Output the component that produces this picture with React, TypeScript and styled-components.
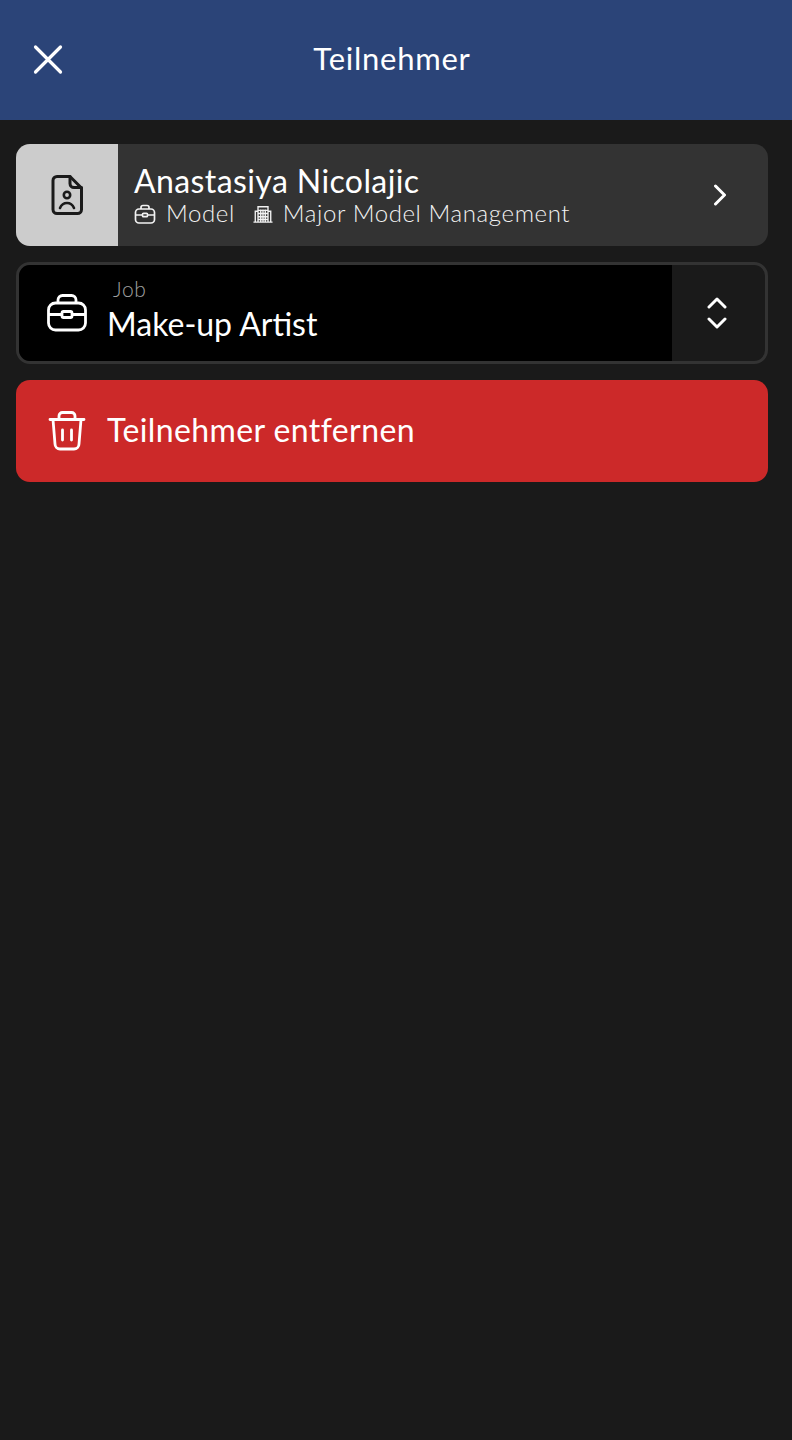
import styled, { createGlobalStyle } from 'styled-components';

const GlobalStyle = createGlobalStyle`
  html, body {
    margin: 0;
    padding: 0;
    background: #1a1a1a;
  }

  * {
    box-sizing: border-box;
  }
`;

const Page = styled.div`
  font-family: Lato, "Open Sans", sans-serif;
  width: 792px;
  min-height: 1440px;
  background: #1a1a1a;
  color: #fff;
`;

const Header = styled.header`
  display: flex;
  align-items: center;
  justify-content: center;
  position: relative;
  height: 120px;
  padding: 0 8px 4px 0;
  background: #2b4478;
`;

const CloseButton = styled.div`
  position: absolute;
  left: 30px;
  top: 42px;
  width: 36px;
  height: 36px;
`;

const Title = styled.h1`
  font-size: 31px;
  font-weight: 400;
  letter-spacing: 0.75px;
  margin: 0;
`;

const Content = styled.main`
  display: flex;
  flex-direction: column;
  gap: 16px;
  padding: 24px 24px 24px 16px;
`;

const ParticipantCard = styled.div`
  display: flex;
  align-items: center;
  height: 102px;
  border-radius: 14px;
  overflow: hidden;
  background: #333;
`;

const Thumb = styled.div`
  display: flex;
  align-items: center;
  justify-content: center;
  flex: none;
  width: 102px;
  height: 102px;
  background: #ccc;
`;

const ParticipantInfo = styled.div`
  display: flex;
  flex-direction: column;
  flex: 1;
  padding: 0 0 2px 16px;
`;

const ParticipantName = styled.div`
  font-size: 32px;
  line-height: 38px;
  letter-spacing: 0.4px;
`;

const MetaRow = styled.div`
  display: flex;
  align-items: center;
  height: 28px;
  margin-top: -2px;
  font-size: 24px;
  font-weight: 300;
  letter-spacing: 0.6px;
  color: #f2f2f2;

  svg {
    margin-top: 4px;
  }
`;

const MetaItem = styled.span`
  display: flex;
  align-items: center;
  gap: 10px;
  margin-right: 18px;
`;

const Chevron = styled.div`
  display: flex;
  justify-content: center;
  flex: none;
  width: 96px;
`;

const JobField = styled.div`
  display: flex;
  height: 102px;
  border: 3px solid #333;
  border-radius: 14px;
  overflow: hidden;
`;

const JobMain = styled.div`
  display: flex;
  align-items: center;
  flex: 1;
  gap: 20px;
  padding-left: 28px;
  background: #000;
`;

const JobText = styled.div`
  display: flex;
  flex-direction: column;
  gap: 4px;
  padding-bottom: 6px;
`;

const JobLabel = styled.div`
  font-size: 21px;
  font-weight: 300;
  line-height: 24px;
  letter-spacing: 0.6px;
  padding-left: 6px;
  color: #a0a0a0;
`;

const JobValue = styled.div`
  font-size: 32px;
  line-height: 38px;
`;

const JobToggle = styled.div`
  display: flex;
  align-items: center;
  justify-content: center;
  flex: none;
  width: 93px;
  padding-right: 3px;
`;

const RemoveButton = styled.button`
  font: inherit;
  font-size: 32px;
  letter-spacing: 0.4px;
  display: flex;
  align-items: center;
  gap: 21px;
  height: 102px;
  padding: 0 0 0 32px;
  border: 0;
  border-radius: 14px;
  color: #fff;
  background: #cc2929;
`;

const RemoveLabel = styled.span`
  padding-bottom: 4px;
`;

export default function App() {
  return (
    <Page>
      <GlobalStyle />
      <Header>
        <CloseButton>
          <svg width="36" height="36" viewBox="0 0 36 36" fill="none" stroke="#fff" strokeWidth="3.2" strokeLinecap="round">
            <path d="M5.500 5 30.500 30M30.500 5 5.500 30" />
          </svg>
        </CloseButton>
        <Title>Teilnehmer</Title>
      </Header>
      <Content>
        <ParticipantCard>
          <Thumb>
            <svg width="32" height="40" viewBox="0 0 32 40" fill="none" stroke="#1a1a1a" strokeWidth="3" strokeLinecap="round" strokeLinejoin="round">
              <path d="M6 1.500h13l11.500 11.500v21.500a4 4 0 0 1-4 4H6a4 4 0 0 1-4-4V5.500a4 4 0 0 1 4-4Z" />
              <path d="M19 1.500v7a4 4 0 0 0 4 4h7.500" />
              <circle cx="16" cy="20" r="3.200" strokeWidth="2.600" />
              <path d="M9 33c1.500-3.500 4-5 7-5s5.500 1.500 7 5" strokeWidth="2.600" />
            </svg>
          </Thumb>
          <ParticipantInfo>
            <ParticipantName>Anastasiya Nicolajic</ParticipantName>
            <MetaRow>
              <MetaItem>
                <svg width="22" height="20" viewBox="0 0 22 20" fill="none" stroke="#f2f2f2" strokeWidth="1.700" strokeLinejoin="round">
                  <rect x="1.500" y="5" width="19" height="14" rx="3.500" />
                  <path d="M7 5V3.500A2 2 0 0 1 9 1.500h4a2 2 0 0 1 2 2V5M1.500 11h6.500M14 11h6.500" />
                  <rect x="8.500" y="9.300" width="5" height="3.400" rx="1" />
                </svg>
                Model
              </MetaItem>
              <MetaItem>
                <svg width="20" height="20" viewBox="0 0 22 20" fill="none" stroke="#f2f2f2" strokeWidth="1.500">
                  <path d="M0.500 19h21M2.500 19V7h3M19.500 19V7h-3M5.500 19V2h11v17M8.500 5v14M11 5v14M13.500 5v14M5.500 6h11M5.500 9.500h11M5.500 13h11M5.500 16h11" />
                </svg>
                Major Model Management
              </MetaItem>
            </MetaRow>
          </ParticipantInfo>
          <Chevron>
            <svg width="14" height="22" viewBox="0 0 14 22" fill="none" stroke="#fff" strokeWidth="3" strokeLinecap="round" strokeLinejoin="round">
              <path d="M2.500 2 11.500 11 2.500 20" />
            </svg>
          </Chevron>
        </ParticipantCard>
        <JobField>
          <JobMain>
            <svg width="40" height="38" viewBox="0 0 40 38" fill="none" stroke="#fff" strokeWidth="2.800" strokeLinejoin="round">
              <rect x="1.500" y="9" width="37" height="27" rx="7" />
              <path d="M11 9V6a4.500 4.500 0 0 1 4.500-4.500h9A4.500 4.500 0 0 1 29 6v3M1.500 20.500H15M25 20.500h13.500" />
              <rect x="15" y="17.500" width="10" height="6" rx="1.500" />
            </svg>
            <JobText>
              <JobLabel>Job</JobLabel>
              <JobValue>Make-up Artist</JobValue>
            </JobText>
          </JobMain>
          <JobToggle>
            <svg width="20" height="32" viewBox="0 0 20 32" fill="none" stroke="#fff" strokeWidth="3" strokeLinecap="round" strokeLinejoin="round">
              <path d="M2 10 10 2 18 10M2 22 10 30 18 22" />
            </svg>
          </JobToggle>
        </JobField>
        <RemoveButton>
          <svg width="38" height="40" viewBox="0 0 38 40" fill="none" stroke="#fff" strokeWidth="2.800" strokeLinecap="round" strokeLinejoin="round">
            <path d="M2 8.500h34M5 8.500 7 33a5 5 0 0 0 5 5h14a5 5 0 0 0 5-5l2-24.500" />
            <path d="M11 8V5a3.500 3.500 0 0 1 3.500-3.500h9A3.500 3.500 0 0 1 27 5v3M14.500 19v10M23.500 19v10" />
          </svg>
          <RemoveLabel>Teilnehmer entfernen</RemoveLabel>
        </RemoveButton>
      </Content>
    </Page>
  );
}
